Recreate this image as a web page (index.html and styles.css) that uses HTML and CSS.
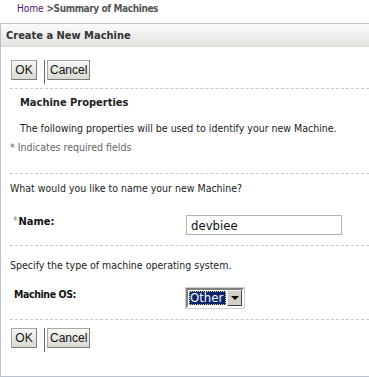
FILE: index.html
```html
<!DOCTYPE html>
<html>
<head>
  <title>Create a New Machine</title>
  <meta charset="UTF-8">
  <link rel="stylesheet" href="styles.css">
</head>
<body>
<div class="crumbs">
  <a href="#">Home</a> <span class="crumb-current">&gt;Summary of Machines</span>
</div>

<div class="panel">
  <div class="panel-title">Create a New Machine</div>

  <div class="actions">
    <button class="btn">OK</button>
    <span class="btn-sep"></span>
    <button class="btn">Cancel</button>
  </div>

  <div class="section">
    <div class="section-title">Machine Properties</div>
    <p class="intro">The following properties will be used to identify your new Machine.</p>
    <p class="required-note">* Indicates required fields</p>
  </div>

  <div class="section">
    <p class="question">What would you like to name your new Machine?</p>
    <div class="field">
      <label class="field-label"><span class="star">*</span>Name:</label>
      <input class="text-input" type="text" value="devbiee">
    </div>
  </div>

  <div class="section">
    <p class="question question-os">Specify the type of machine operating system.</p>
    <div class="field field-os">
      <label class="field-label os-label">Machine OS:</label>
      <span class="combo">
        <span class="combo-value"><span class="combo-focus">Other</span></span>
        <span class="combo-arrow"></span>
      </span>
    </div>
  </div>

  <div class="actions actions-bottom">
    <button class="btn">OK</button>
    <span class="btn-sep"></span>
    <button class="btn">Cancel</button>
  </div>
</div>
</body>
</html>
```

FILE: styles.css
```css
body {
  margin: 0;
  background-color: #fff;
  font-family: "DejaVu Sans Condensed", "Liberation Sans", sans-serif;
  font-size: 10.5px;
  color: #222;
  overflow: hidden;
}

p {
  margin: 0;
}

.crumbs {
  height: 23px;
  box-sizing: border-box;
  padding: 2px 0 0 17px;
  font-size: 10px;
  line-height: 14px;
}

.crumbs a {
  color: #4a1668;
  text-decoration: none;
}

.crumb-current {
  color: #555;
  font-weight: bold;
  letter-spacing: -0.4px;
}

.panel {
  border-top: 1px solid #c4c4c4;
  border-left: 1px solid #b9c2ca;
  border-bottom: 1px solid #b9c2ca;
  height: 354px;
  box-sizing: border-box;
}

.panel-title {
  height: 22px;
  line-height: 23px;
  padding-left: 5px;
  font-size: 11px;
  font-weight: bold;
  color: #333;
  background: linear-gradient(#fbfbfb, #e2e4df);
  border-bottom: 1px solid #d6dad3;
}

.actions {
  display: flex;
  align-items: flex-start;
  margin-left: 9px;
  padding: 13px 0 0 1px;
  height: 28px;
  border-bottom: 1px dashed #c9c9c9;
}

.actions-bottom {
  border-bottom: none;
  padding-top: 8px;
}

.btn {
  font-family: "Liberation Sans", Arial, sans-serif;
  font-size: 12px;
  color: #111;
  height: 20px;
  min-width: 26px;
  padding: 0 2px;
  background: linear-gradient(#f8f8f6, #d9d9d1);
  border: 1px solid #a8a8a8;
  border-right-color: #7c7c7c;
  border-bottom-color: #7c7c7c;
  border-radius: 0;
  line-height: 17px;
}

.btn-sep {
  width: 1px;
  height: 24px;
  background-color: #6a6a6a;
  margin: 0 2px 0 7px;
}

.section {
  margin-left: 9px;
  border-bottom: 1px dashed #c9c9c9;
}

.section-title {
  font-size: 11px;
  font-weight: bold;
  padding: 7px 0 0 10px;
  line-height: 14px;
}

.intro {
  padding-left: 10px;
  margin-top: 11px;
  line-height: 14px;
}

.required-note {
  color: #666;
  margin-top: 5px;
  padding-bottom: 19px;
  line-height: 14px;
}

.question {
  padding-top: 7px;
  line-height: 14px;
}

.question-os {
  padding-top: 12px;
}

.field {
  display: flex;
  align-items: flex-start;
  margin-top: 20px;
  padding-bottom: 10px;
}

.field-os {
  margin-top: 16px;
  padding-bottom: 11px;
}

.field-label {
  width: 175px;
  font-size: 11px;
  font-weight: bold;
  color: #111;
  line-height: 14px;
  margin-top: -1px;
}

.os-label {
  padding-left: 4px;
  width: 171px;
  margin-top: -1px;
  font-size: 10.5px;
  letter-spacing: -0.4px;
}

.star {
  color: #888;
  font-weight: normal;
  font-size: 10px;
  vertical-align: 1px;
  margin: 0 1px 0 3px;
}

.text-input {
  display: block;
  width: 156px;
  height: 20px;
  box-sizing: border-box;
  border: 1px solid #b4b4ac;
  padding: 1px 4px 0;
  margin: 0 0 0 1px;
  font-family: "DejaVu Sans Condensed", "DejaVu Sans", sans-serif;
  font-size: 13px;
  color: #111;
}

.combo {
  display: flex;
  width: 58px;
  height: 20px;
  box-sizing: border-box;
  border: 2px solid;
  border-color: #808080 #fff #fff #808080;
  outline: 1px solid #d4d0c8;
  margin-left: 1px;
  background-color: #fff;
}

.combo-value {
  flex: 1;
  padding: 1px;
}

.combo-focus {
  display: block;
  height: 14px;
  background-color: #0a246a;
  color: #fff;
  outline: 1px dotted #e8d27a;
  outline-offset: -1px;
  font-family: "DejaVu Sans Condensed", "DejaVu Sans", sans-serif;
  font-size: 13px;
  line-height: 14px;
  padding-left: 1px;
}

.combo-arrow {
  position: relative;
  width: 15px;
  background-color: #d4d0c8;
  border: 1px solid;
  border-color: #f0f0f0 #404040 #404040 #f0f0f0;
  box-sizing: border-box;
}

.combo-arrow::after {
  content: "";
  position: absolute;
  left: 3px;
  top: 5px;
  border-left: 4px solid transparent;
  border-right: 4px solid transparent;
  border-top: 4px solid #000;
}
```
